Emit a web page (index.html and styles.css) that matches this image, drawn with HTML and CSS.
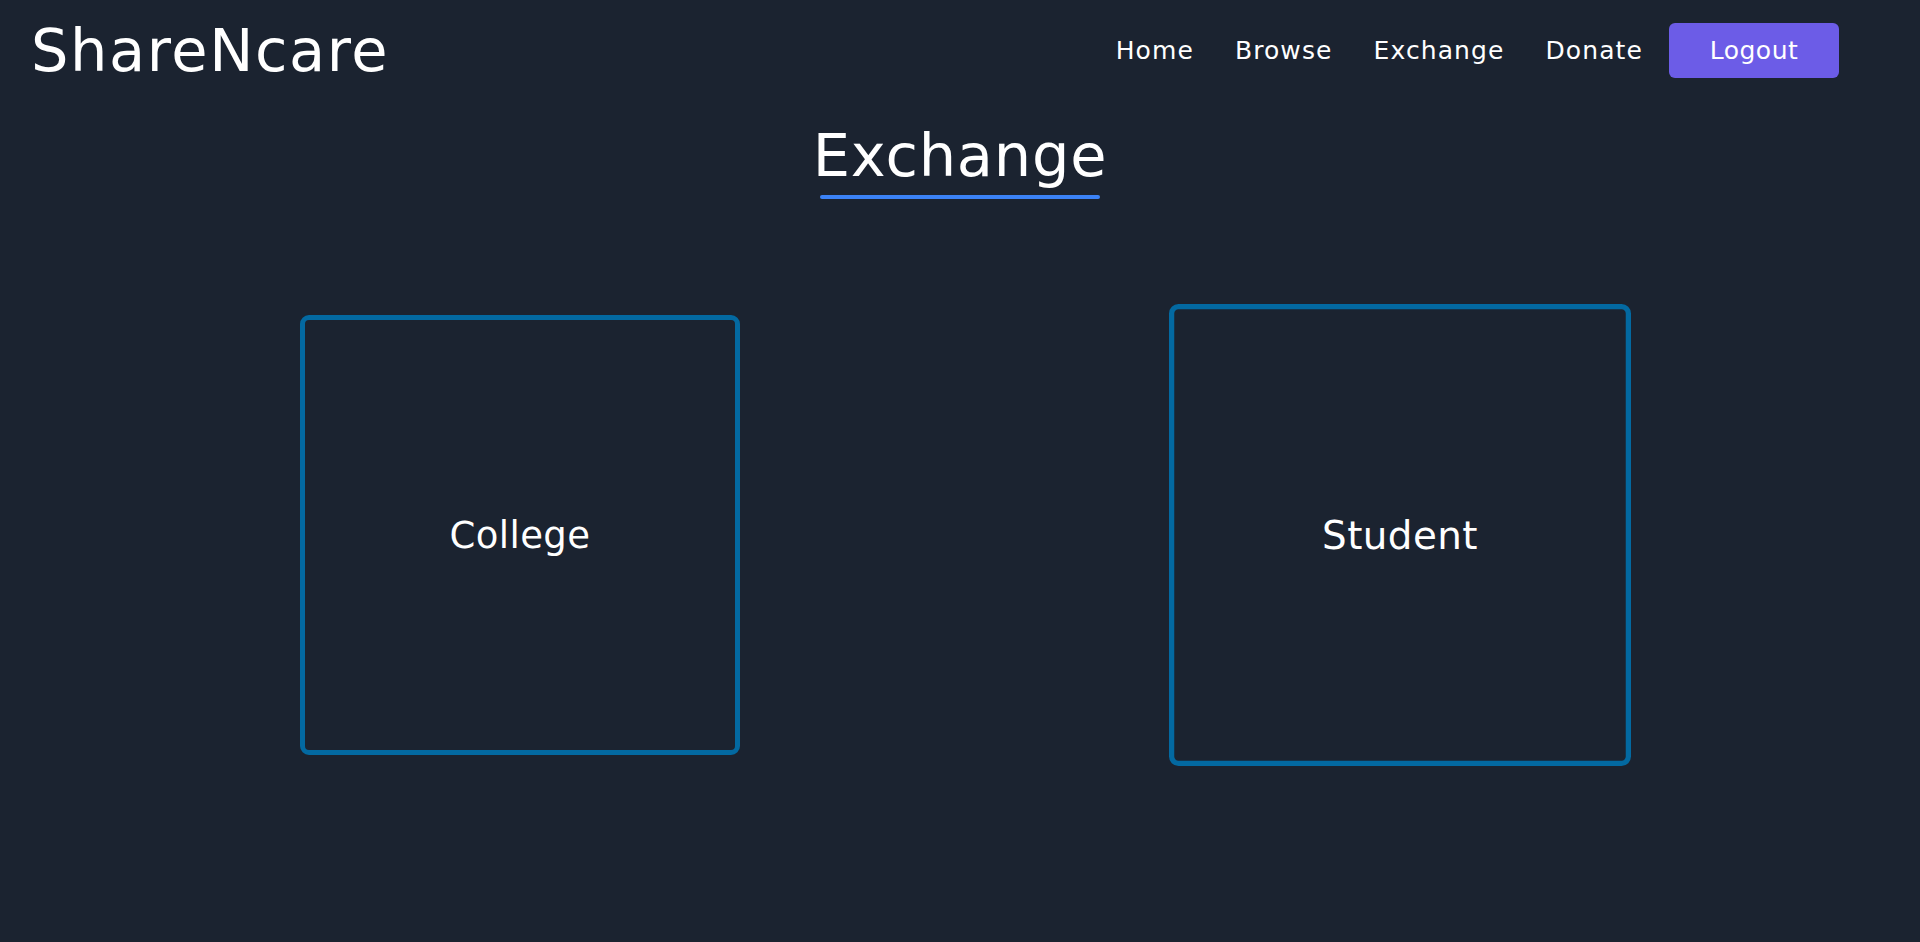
FILE: index.html
```html
<!DOCTYPE html>
<html lang="en">
<head>
<meta charset="utf-8">
<title>ShareNcare - Exchange</title>
<link rel="stylesheet" href="styles.css">
</head>
<body>
<header class="header">
  <div class="logo">ShareNcare</div>
  <nav class="nav">
    <div class="links">
      <a class="link" href="#">Home</a>
      <a class="link" href="#">Browse</a>
      <a class="link" href="#">Exchange</a>
      <a class="link" href="#">Donate</a>
    </div>
    <button class="btn">Logout</button>
  </nav>
</header>
<main class="main">
  <div class="title-wrap">
    <h1 class="title">Exchange</h1>
    <div class="underline"></div>
  </div>
  <section class="cards">
    <div class="card">College</div>
    <div class="card card-hover">Student</div>
  </section>
</main>
</body>
</html>
```
FILE: styles.css
```css
html, body {
  margin: 0;
  padding: 0;
}
body {
  background: #1b2330;
  color: #ffffff;
  font-family: "DejaVu Sans", "Liberation Sans", sans-serif;
  min-height: 942px;
}
.header {
  display: flex;
  justify-content: space-between;
  align-items: center;
  height: 101px;
  padding: 0 81px 0 31px;
}
.logo {
  font-size: 59px;
  letter-spacing: 1.6px;
  font-weight: 400;
}
.nav {
  display: flex;
  align-items: center;
  gap: 26px;
}
.links {
  display: flex;
  align-items: center;
  gap: 41px;
}
.link {
  color: #ffffff;
  text-decoration: none;
  font-size: 25px;
  letter-spacing: 1.1px;
}
.btn {
  background: #6c5ce7;
  color: #ffffff;
  border: none;
  border-radius: 6px;
  width: 170px;
  height: 55px;
  font-family: inherit;
  font-size: 25px;
  letter-spacing: 0.5px;
  padding: 0;
}
.main {
  display: flex;
  flex-direction: column;
  align-items: center;
}
.title-wrap {
  display: flex;
  flex-direction: column;
  align-items: center;
  margin-top: 20px;
}
.title {
  margin: 0;
  font-size: 59px;
  font-weight: 400;
  letter-spacing: 0.8px;
  line-height: normal;
}
.underline {
  width: 280px;
  height: 4px;
  border-radius: 2px;
  background: #3b82f6;
  margin-top: 5px;
}
.cards {
  display: flex;
  justify-content: center;
  gap: 440px;
  margin-top: 116px;
}
.card {
  box-sizing: border-box;
  width: 440px;
  height: 440px;
  border: 5px solid #0369a1;
  border-radius: 9px;
  display: flex;
  align-items: center;
  justify-content: center;
  font-size: 37px;
  letter-spacing: 0.4px;
}
.card-hover {
  transform: scale(1.05);
}
```
